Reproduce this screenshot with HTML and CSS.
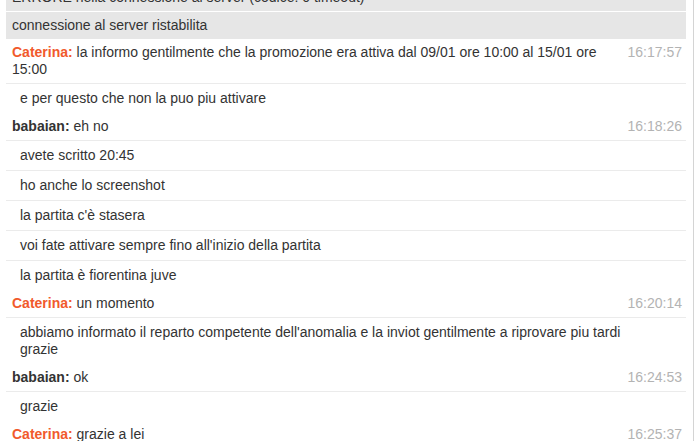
FILE: index.html
```html
<!DOCTYPE html>
<html>
<head>
    <link rel="stylesheet" href="styles.css">
</head>
<body>
    <div class="chat-frame">
        <div class="chat-log">
            <div class="system-msg">ERRORE nella connessione al server (codice: 0 timeout)</div>
            <div class="system-msg">connessione al server ristabilita</div>

            <div class="group">
                <div class="msg">
                    <div class="text"><span class="name operator">Caterina:</span> la informo gentilmente che la promozione era attiva dal 09/01 ore 10:00 al 15/01 ore 15:00</div>
                    <div class="time">16:17:57</div>
                </div>
                <div class="msg follow"><div class="text">e per questo che non la puo piu attivare</div></div>
            </div>

            <div class="group">
                <div class="msg">
                    <div class="text"><span class="name customer">babaian:</span> eh no</div>
                    <div class="time">16:18:26</div>
                </div>
                <div class="msg follow"><div class="text">avete scritto 20:45</div></div>
                <div class="msg follow"><div class="text">ho anche lo screenshot</div></div>
                <div class="msg follow"><div class="text">la partita c'è stasera</div></div>
                <div class="msg follow"><div class="text">voi fate attivare sempre fino all'inizio della partita</div></div>
                <div class="msg follow"><div class="text">la partita è fiorentina juve</div></div>
            </div>

            <div class="group">
                <div class="msg">
                    <div class="text"><span class="name operator">Caterina:</span> un momento</div>
                    <div class="time">16:20:14</div>
                </div>
                <div class="msg follow"><div class="text">abbiamo informato il reparto competente dell'anomalia e la inviot gentilmente a riprovare piu tardi grazie</div></div>
            </div>

            <div class="group">
                <div class="msg">
                    <div class="text"><span class="name customer">babaian:</span> ok</div>
                    <div class="time">16:24:53</div>
                </div>
                <div class="msg follow"><div class="text">grazie</div></div>
            </div>

            <div class="group">
                <div class="msg">
                    <div class="text"><span class="name operator">Caterina:</span> grazie a lei</div>
                    <div class="time">16:25:37</div>
                </div>
            </div>
        </div>
        <div class="scroll-track"></div>
    </div>
</body>
</html>
```

FILE: styles.css
```css
body {
    margin: 0;
    background: #fff;
    font-family: "Liberation Sans", Arial, sans-serif;
    font-size: 14px;
    color: #333;
    overflow: hidden;
}

.chat-frame {
    display: flex;
    height: 441px;
    padding-left: 6px;
}

.chat-log {
    width: 680px;
    margin-top: -17px;
}

.scroll-track {
    margin-left: 7px;
    width: 6px;
    border-left: 1px solid #d4d4d4;
}

.system-msg {
    background: #e6e6e6;
    padding: 5px 6px;
    line-height: 17px;
    border-top: 1px solid #fff;
}

.msg {
    display: flex;
    align-items: flex-start;
    padding: 5px 4px 5px 6px;
    line-height: 17px;
}
.msg + .msg {
    border-top: 1px solid #ebebeb;
}
.msg.follow {
    padding: 6px 56px 6px 14px;
}

.text {
    flex: 1;
}

.name {
    font-weight: bold;
}
.operator {
    color: #f15a2c;
}
.customer {
    color: #333;
}

.time {
    width: 56px;
    margin-left: 6px;
    text-align: right;
    color: #b3b3b3;
}
```
